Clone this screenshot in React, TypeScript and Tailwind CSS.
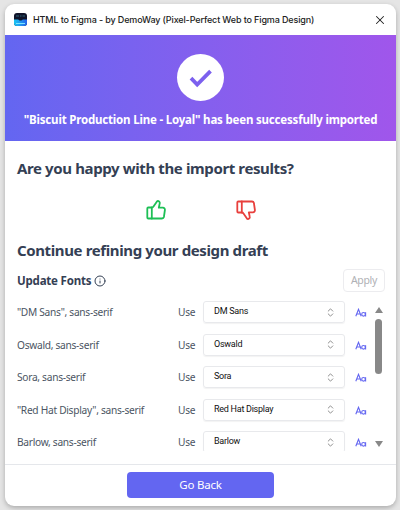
import { useState } from 'react'
import { ChevronsUpDown, Info, X } from 'lucide-react'

interface FontRow {
  source: string
  target: string
}

const fonts: FontRow[] = [
  { source: '"DM Sans", sans-serif', target: 'DM Sans' },
  { source: 'Oswald, sans-serif', target: 'Oswald' },
  { source: 'Sora, sans-serif', target: 'Sora' },
  { source: '"Red Hat Display", sans-serif', target: 'Red Hat Display' },
  { source: 'Barlow, sans-serif', target: 'Barlow' },
]

function Logo() {
  return (
    <svg viewBox="0 0 13 13" className="h-[13px] w-[13px] shrink-0">
      <defs>
        <linearGradient id="logo" x1="0" y1="0" x2="1" y2="0">
          <stop offset="0" stopColor="#19c8f5" />
          <stop offset="1" stopColor="#2463eb" />
        </linearGradient>
      </defs>
      <rect width="13" height="13" rx="3" fill="#10142a" />
      <path d="M0 6.5h13V10a3 3 0 0 1-3 3H3a3 3 0 0 1-3-3z" fill="url(#logo)" />
      <path d="M2 3h3M6 3h1.5M8.5 3H11" stroke="#2f6478" strokeWidth="1" />
      <path d="M3.5 5.5h6l-2 2h-2z" fill="#10142a" />
      <path d="M2 10.5h9" stroke="#7be6ff" strokeWidth="1" />
    </svg>
  )
}

function Thumb({ down = false }: { down?: boolean }) {
  return (
    <svg
      viewBox="0 0 20 20"
      className={`h-5 w-5 ${down ? '-scale-y-100 text-[#e8403d]' : 'text-[#1dbf55]'}`}
      fill="none"
      stroke="currentColor"
      strokeWidth="1.8"
      strokeLinejoin="round"
      strokeLinecap="round"
    >
      <path d="M5.8 7.5H2.3a1 1 0 0 0-1 1v9a1 1 0 0 0 1 1H16a2 2 0 0 0 1.9-1.5l1-7a2 2 0 0 0-2-2.3h-4.1l.9-4.2A2 2 0 0 0 11.3 1L7.5 6.6a2 2 0 0 1-1.7.9z" />
      <path d="M5.8 7.5v11" />
    </svg>
  )
}

export default function App() {
  const [selected] = useState(fonts)

  return (
    <main className="h-[510px] w-[400px] bg-[#e5e5e5] pt-1 pl-[5px] font-['Noto_Sans',sans-serif] text-[#344054]">
      <div className="flex h-[502px] w-[391px] flex-col overflow-hidden rounded-[9px] bg-white shadow-[0_2px_5px_rgba(0,0,0,0.25)]">
        <header className="flex h-[31px] shrink-0 items-center pr-[9px] pl-[9px]">
          <Logo />
          <h1 className="ml-1.5 font-['Inter',sans-serif] text-[9px] font-medium tracking-[-0.13px] whitespace-nowrap text-[#222]">
            HTML to Figma - by DemoWay (Pixel-Perfect Web to Figma Design)
          </h1>
          <X className="ml-auto h-3.5 w-3.5 text-[#222]" strokeWidth={1.8} />
        </header>

        <section className="flex h-[106px] shrink-0 flex-col items-center bg-linear-to-r from-[#6366f1] to-[#a056eb] pt-[19px]">
          <div className="flex h-[47px] w-[47px] items-center justify-center rounded-full bg-white">
            <svg viewBox="0 0 24 24" className="h-6 w-6" fill="none" stroke="#7c60ee" strokeWidth="3.8">
              <path d="m2 12.2 6.2 6.3L21.5 5.2" />
            </svg>
          </div>
          <p className="mt-[9px] text-[11.5px] leading-5 font-bold tracking-[-0.19px] whitespace-nowrap text-white">
            "Biscuit Production Line - Loyal" has been successfully imported
          </p>
        </section>

        <section className="flex h-[323px] shrink-0 flex-col pr-[11px] pl-3">
          <h2 className="mt-4 text-[15px] leading-[22px] font-bold tracking-[-0.38px] whitespace-nowrap">
            Are you happy with the import results?
          </h2>
          <div className="mt-[21px] flex justify-center gap-[70px] pr-px">
            <button><Thumb /></button>
            <button><Thumb down /></button>
          </div>
          <h2 className="mt-[19px] text-[15px] leading-[22px] font-bold tracking-[-0.38px] whitespace-nowrap">
            Continue refining your design draft
          </h2>

          <div className="mt-2 flex h-[23px] items-center">
            <h3 className="text-[11.5px] font-bold tracking-[-0.2px] whitespace-nowrap">Update Fonts</h3>
            <Info className="ml-[3px] h-3 w-3" strokeWidth={2} />
            <button className="ml-auto h-[23px] w-[42px] rounded-[4px] border border-[#ececef] text-[10.5px] tracking-[-0.3px] text-[#b0b1b5]">
              Apply
            </button>
          </div>

          <div className="mt-[9px] flex h-[150px] overflow-hidden">
            <div className="w-[352px] shrink-0">
              {selected.map((font) => (
                <div key={font.target} className="flex h-[32.5px] items-start text-[10.2px] tracking-[-0.29px] text-[#4b5563]">
                  <span className="w-[161px] leading-[23px] whitespace-nowrap">{font.source}</span>
                  <span className="w-[25px] leading-[23px]">Use</span>
                  <button className="flex h-[22px] w-[142px] items-center justify-between rounded-[3px] border border-[#e8e9ec] pr-2 pl-2.5 font-['Roboto',sans-serif] text-[9px] tracking-[-0.26px] text-[#111] shadow-[0_1px_1px_rgba(0,0,0,0.05)]">
                    {font.target}
                    <ChevronsUpDown className="h-[11px] w-[11px] text-[#777]" strokeWidth={1.8} />
                  </button>
                  <svg viewBox="0 0 12 10" className="mt-[7px] ml-[10px] h-2.5 w-3" fill="none" stroke="#6366f1" strokeWidth="1.1">
                    <path d="m.8 8.3 2.7-7 2.7 7M1.8 6h3.4" />
                    <circle cx="8.5" cy="6.3" r="1.8" />
                    <path d="M10.6 4.2v4.3" />
                  </svg>
                </div>
              ))}
            </div>
            <div className="ml-auto flex w-[13px] flex-col items-center pb-1">
              <svg viewBox="0 0 8 6" className="mt-1.5 h-1.5 w-2 shrink-0" fill="#888"><path d="M4 0 8 6H0z" /></svg>
              <div className="mt-1.5 h-[55px] w-[7px] rounded-full bg-[#888]" />
              <svg viewBox="0 0 8 6" className="mt-auto h-1.5 w-2 shrink-0" fill="#888"><path d="M0 0h8L4 6z" /></svg>
            </div>
          </div>
        </section>

        <footer className="flex h-[42px] shrink-0 justify-center border-t border-[#e5e7eb] pt-[7px]">
          <button className="h-[26px] w-[147px] rounded-[4px] bg-[#6366f1] text-[11.5px] tracking-[-0.2px] text-white">Go Back</button>
        </footer>
      </div>
    </main>
  )
}
